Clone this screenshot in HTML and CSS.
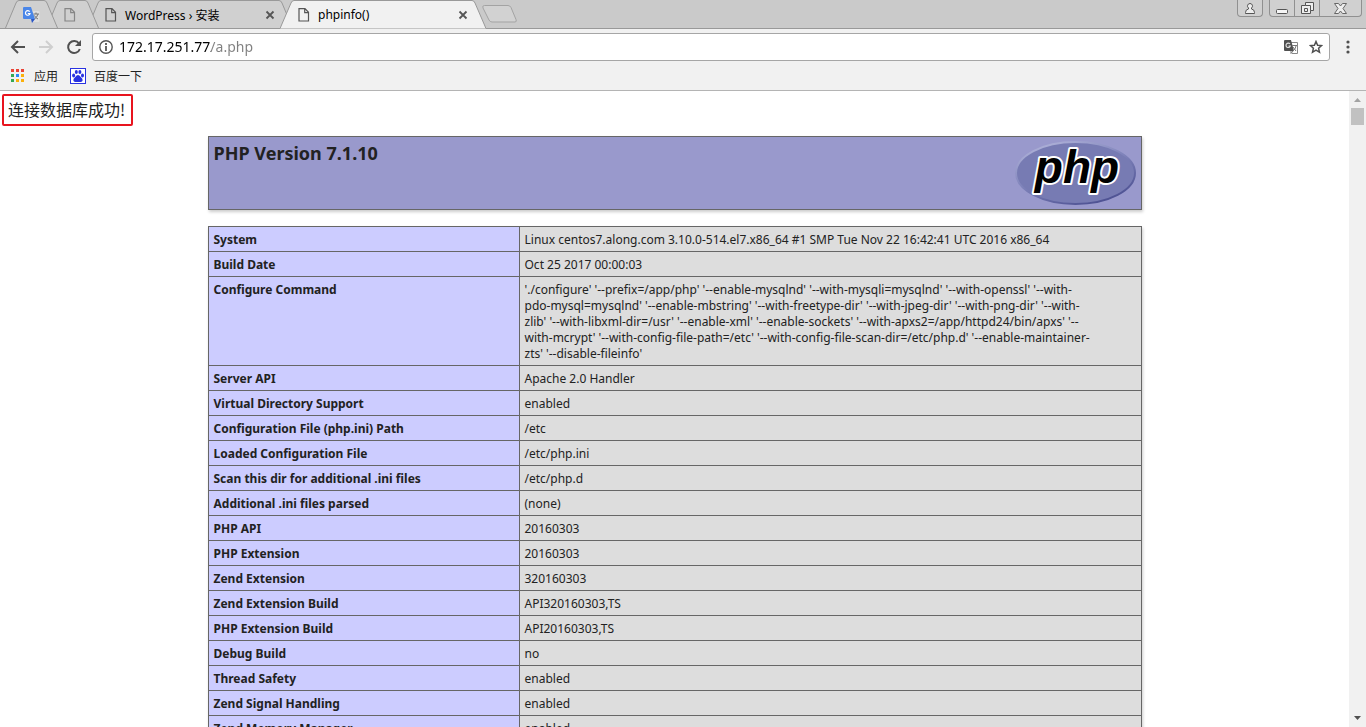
FILE: index.html
```
<!DOCTYPE html>
<html lang="zh-CN">

<head>
    <meta charset="UTF-8">
    <meta name="viewport" content="width=device-width, initial-scale=1.0">
    <title>phpinfo()</title>
    <link rel="stylesheet" href="styles.css">
</head>

<body>
    <header class="browser">
        <div class="tabs">
            <div class="tab tab-small">
                <svg class="shape" width="53" height="28"><path d="M0.500 28L11 3Q12 .5 14 .5H39Q41 .5 42 3L52.500 28"/></svg>
                <svg class="icon" width="17" height="16" viewBox="0 0 17 16">
                    <path d="M7 4h8.500q1 0 1 1v9q0 1-1 1H10z" fill="#dedede"/>
                    <path d="M1 0h7l4 12H1q-1 0-1-1V1q0-1 1-1z" fill="#4a86e8"/>
                    <path d="M8 12h4l-3 4z" fill="#2a56c6"/>
                    <path d="M6.700 4.700A2.300 2.300 0 1 0 7 6.500H4.800" fill="none" stroke="#fff" stroke-width="1.200"/>
                    <path d="M10.500 7H16M13 5.500V7M15 7q-1 3.500-3.500 5M11.500 8.500q1 2.500 3.500 3.500" fill="none" stroke="#777"/>
                </svg>
            </div>
            <div class="tab tab-small">
                <svg class="shape" width="53" height="28"><path d="M0.500 28L11 3Q12 .5 14 .5H39Q41 .5 42 3L52.500 28"/></svg>
                <svg class="icon faded" width="12" height="14" viewBox="0 0 12 14"><path d="M1 .7h6L10.500 4.300V13H1zM6.700 1v3.600h3.600" fill="none" stroke="#555" stroke-width="1.200"/></svg>
            </div>
            <div class="tab">
                <svg class="shape" width="206" height="28"><path d="M0.500 28L11 3Q12 .5 14 .5H192Q194 .5 195 3L205.500 28"/></svg>
                <svg class="icon" width="12" height="14" viewBox="0 0 12 14"><path d="M1 .7h6L10.500 4.300V13H1zM6.700 1v3.600h3.600" fill="none" stroke="#555" stroke-width="1.200"/></svg>
                <span class="tab-title">WordPress › 安装</span>
                <button class="close" aria-label="关闭"><svg width="10" height="10"><path d="M1.500 1.500l7 7m0-7l-7 7" stroke="#555" stroke-width="1.800"/></svg></button>
            </div>
            <div class="tab active">
                <svg class="shape" width="206" height="29"><path d="M0 28.500L11 3Q12 .5 14 .5H192Q194 .5 195 3L206 28.500"/></svg>
                <svg class="icon" width="12" height="14" viewBox="0 0 12 14"><path d="M1 .7h6L10.500 4.300V13H1zM6.700 1v3.600h3.600" fill="none" stroke="#555" stroke-width="1.200"/></svg>
                <span class="tab-title">phpinfo()</span>
                <button class="close" aria-label="关闭"><svg width="10" height="10"><path d="M1.500 1.500l7 7m0-7l-7 7" stroke="#555" stroke-width="1.800"/></svg></button>
            </div>
            <button class="new-tab" aria-label="打开新的标签页"><svg width="35" height="18"><path d="M2.500.5H26q2 0 3 2l5 12q1 2.500-1 2.500H10q-2 0-3-2L1 3Q0 .5 2.500.5z" fill="#d2d2d2" stroke="#a3a3a3"/></svg></button>
            <div class="window-buttons">
                <button class="win user" aria-label="用户"><svg width="12" height="13"><path d="M6 1.500a2.500 2.500 0 0 1 1.500 4.500v1q3 .5 3 3.500v1h-9v-1q0-3 3-3.500V6A2.500 2.500 0 0 1 6 1.500z" fill="#eee" stroke="#555"/></svg></button>
                <div class="win-group">
                    <button class="win" aria-label="最小化"><svg width="13" height="13"><rect x=".5" y="7.500" width="11" height="4" rx="1" fill="#f5f5f5" stroke="#555"/></svg></button>
                    <button class="win" aria-label="还原"><svg width="13" height="13"><path d="M4.500.5h8v8h-3v3h-9v-8h4z" fill="#eee" stroke="#555"/><path d="M4.500 3.500h5v5M3.500 6.500h3v3h-3z" fill="none" stroke="#555"/></svg></button>
                    <button class="win wide" aria-label="关闭窗口"><svg width="13" height="11"><path d="M.5.5h4l2 2.500 2-2.500h4L9 5.500l3.500 5h-4L6.500 8l-2 2.500h-4l3.500-5z" fill="#eee" stroke="#666"/></svg></button>
                </div>
            </div>
        </div>
        <div class="toolbar">
            <button class="nav" aria-label="后退"><svg width="16" height="16"><path d="M15 8H2M8 2L2 8l6 6" fill="none" stroke="#505050" stroke-width="2"/></svg></button>
            <button class="nav" aria-label="前进"><svg width="16" height="16"><path d="M1 8h13M8 2l6 6-6 6" fill="none" stroke="#cfcfcf" stroke-width="2"/></svg></button>
            <button class="nav" aria-label="重新加载"><svg width="16" height="16"><path d="M13 4.500A6 6 0 1 0 13.800 10" fill="none" stroke="#505050" stroke-width="2"/><path d="M15 1v6H9z" fill="#505050"/></svg></button>
            <div class="address">
                <svg width="14" height="14"><circle cx="7" cy="7" r="6.200" fill="none" stroke="#555" stroke-width="1.400"/><path d="M7 6v5M7 3v2" stroke="#555" stroke-width="1.800"/></svg>
                <input class="url" type="text" aria-label="地址" value="172.17.251.77/a.php">
                <button class="nav" aria-label="翻译此页"><svg width="15" height="14"><path d="M6 2.500h7.500v11H8" fill="#fff" stroke="#888"/><path d="M1 0h6l3 11H1q-1 0-1-1V1q0-1 1-1z" fill="#505050"/><path d="M6 4A2.200 2.200 0 1 0 6.300 6H4.500" fill="none" stroke="#ddd" stroke-width="1.200"/><path d="M8 5.500h5M12 6q-.5 3-3 5M9 7l3 4M7 11v2.500l2-2.500" fill="none" stroke="#777"/></svg></button>
                <button class="nav" aria-label="为此页添加书签"><svg width="14" height="14"><path d="M7 1.500l1.600 3.700 4 .4-3 2.700.9 4L7 10.200l-3.500 2.100.9-4-3-2.700 4-.4z" fill="none" stroke="#505050" stroke-width="1.500"/></svg></button>
            </div>
            <button class="nav menu" aria-label="菜单"><svg width="4" height="14" fill="#505050"><circle cx="2" cy="2" r="1.600"/><circle cx="2" cy="7" r="1.600"/><circle cx="2" cy="12" r="1.600"/></svg></button>
        </div>
        <nav class="bookmarks">
            <a href="#">
                <svg width="13" height="13"><path d="M0 0h3v3H0zM5 0h3v3H5zM10 0h3v3h-3z" fill="#ea4335"/><path d="M0 5h3v3H0zM0 10h3v3H0z" fill="#34a853"/><path d="M5 5h3v3H5z" fill="#2a8af6"/><path d="M10 5h3v3h-3zM5 10h3v3H5zM10 10h3v3h-3z" fill="#fbb00a"/></svg>
                应用
            </a>
            <a href="#">
                <svg width="16" height="16"><rect x=".5" y=".5" width="15" height="15" fill="#fff" stroke="#2932e1"/><g fill="#2932e1"><ellipse cx="3.600" cy="7.500" rx="1.500" ry="1.900"/><ellipse cx="6.300" cy="4" rx="1.500" ry="2"/><ellipse cx="9.900" cy="4" rx="1.500" ry="2"/><ellipse cx="12.500" cy="7.500" rx="1.500" ry="1.900"/><path d="M8 7q1.500 0 2.500 1.800l1.800 2q1 2.700-1.300 3.200H5q-2.300-.5-1.300-3.200l1.800-2Q6.500 7 8 7z"/></g></svg>
                百度一下
            </a>
        </nav>
    </header>
    <div class="view">
        <main class="page">
            <p class="message">连接数据库成功!</p>
            <div class="center">
                <div class="banner">
                    <h1>PHP Version 7.1.10</h1>
                    <svg class="logo" width="121" height="65" viewBox="0 0 121 65" role="img" aria-label="PHP logo">
                        <defs>
                            <linearGradient id="rim" x1="0.200" y1="0" x2="0.800" y2="1">
                                <stop offset="0" stop-color="#b0b3d9"/>
                                <stop offset=".45" stop-color="#8084bb"/>
                                <stop offset="1" stop-color="#484c8e"/>
                            </linearGradient>
                        </defs>
                        <ellipse cx="60.500" cy="32" rx="59.500" ry="31" fill="#777bb3" stroke="url(#rim)" stroke-width="2"/>
                        <text class="logo-text" x="62" y="42" text-anchor="middle">php</text>
                    </svg>
                </div>
                <table>
                    <tr><th scope="row">System</th><td>Linux centos7.along.com 3.10.0-514.el7.x86_64 #1 SMP Tue Nov 22 16:42:41 UTC 2016 x86_64</td></tr>
                    <tr><th scope="row">Build Date</th><td>Oct 25 2017 00:00:03</td></tr>
                    <tr><th scope="row">Configure Command</th><td>'./configure' '--prefix=/app/php' '--enable-mysqlnd' '--with-mysqli=mysqlnd' '--with-openssl' '--with-<br>pdo-mysql=mysqlnd' '--enable-mbstring' '--with-freetype-dir' '--with-jpeg-dir' '--with-png-dir' '--with-<br>zlib' '--with-libxml-dir=/usr' '--enable-xml' '--enable-sockets' '--with-apxs2=/app/httpd24/bin/apxs' '--<br>with-mcrypt' '--with-config-file-path=/etc' '--with-config-file-scan-dir=/etc/php.d' '--enable-maintainer-<br>zts' '--disable-fileinfo'</td></tr>
                    <tr><th scope="row">Server API</th><td>Apache 2.0 Handler</td></tr>
                    <tr><th scope="row">Virtual Directory Support</th><td>enabled</td></tr>
                    <tr><th scope="row">Configuration File (php.ini) Path</th><td>/etc</td></tr>
                    <tr><th scope="row">Loaded Configuration File</th><td>/etc/php.ini</td></tr>
                    <tr><th scope="row">Scan this dir for additional .ini files</th><td>/etc/php.d</td></tr>
                    <tr><th scope="row">Additional .ini files parsed</th><td>(none)</td></tr>
                    <tr><th scope="row">PHP API</th><td>20160303</td></tr>
                    <tr><th scope="row">PHP Extension</th><td>20160303</td></tr>
                    <tr><th scope="row">Zend Extension</th><td>320160303</td></tr>
                    <tr><th scope="row">Zend Extension Build</th><td>API320160303,TS</td></tr>
                    <tr><th scope="row">PHP Extension Build</th><td>API20160303,TS</td></tr>
                    <tr><th scope="row">Debug Build</th><td>no</td></tr>
                    <tr><th scope="row">Thread Safety</th><td>enabled</td></tr>
                    <tr><th scope="row">Zend Signal Handling</th><td>enabled</td></tr>
                    <tr><th scope="row">Zend Memory Manager</th><td>enabled</td></tr>
                </table>
            </div>
        </main>
        <div class="scrollbar">
            <svg width="7" height="4"><path d="M0 4L3.500 0 7 4z" fill="#a3a3a3"/></svg>
            <div class="thumb"></div>
            <svg class="down" width="7" height="4"><path d="M0 0h7L3.500 4z" fill="#505050"/></svg>
        </div>
    </div>
</body>

</html>
```
FILE: styles.css
```
* {
    box-sizing: border-box;
    margin: 0;
    padding: 0;
}

body {
    display: flex;
    flex-direction: column;
    height: 100vh;
    overflow: hidden;
    background-color: #fff;
    color: #222;
    font-family: "Noto Sans", "Noto Sans CJK SC", sans-serif;
    font-size: 12px;
}

svg {
    display: block;
    flex: none;
}

button {
    display: flex;
    align-items: center;
    justify-content: center;
    flex: none;
    border: none;
    background: none;
}

.browser {
    flex: none;
    background-color: #f1f1f1;
    border-bottom: 1px solid #b4b4b4;
    color: #000;
}

/* tab strip */
.tabs {
    display: flex;
    height: 29px;
    padding-left: 5px;
    background-color: #cacaca;
    border-bottom: 1px solid #999;
}

.tab {
    position: relative;
    z-index: 1;
    display: flex;
    align-items: center;
    gap: 8px;
    flex: none;
    width: 206px;
    height: 29px;
    padding: 0 18px;
    margin-right: -12px;
}

.tab-small {
    z-index: 2;
    width: 53px;
}

.tab:first-child {
    z-index: 3;
}

.active {
    z-index: 4;
    margin-left: -1px;
}

.shape {
    position: absolute;
    left: 0;
    top: 0;
    z-index: -1;
    fill: #d0d0d0;
    stroke: #999;
}

.active .shape {
    fill: #f1f1f1;
}

.faded {
    opacity: 0.6;
}

.tab-title {
    flex: 1;
}

.new-tab {
    margin-left: 8px;
}

.window-buttons {
    display: flex;
    gap: 6px;
    margin-left: auto;
    padding-right: 4px;
}

.win-group {
    display: flex;
}

.win {
    width: 25px;
    height: 17px;
    background-color: #d0d0d0;
    border: 1px solid #909090;
    border-top: none;
    border-left-width: 0;
}

.win:first-child {
    width: 26px;
    border-left-width: 1px;
    border-bottom-left-radius: 4px;
}

.win:last-child,
.user {
    border-bottom-right-radius: 4px;
}

.wide {
    width: 42px;
}

/* address row */
.toolbar {
    display: flex;
    align-items: center;
    gap: 12px;
    padding: 4px 12px 0 10px;
}

.address {
    display: flex;
    align-items: center;
    gap: 6px;
    flex: 1;
    height: 28px;
    padding: 0 6px;
    margin-left: -2px;
    background-color: #fff;
    border: 1px solid #a6a6a6;
    border-radius: 3px;
}

.address .nav {
    margin-left: 4px;
}

.url {
    flex: 1;
    min-width: 0;
    padding-bottom: 2px;
    border: none;
    outline: none;
    font-family: inherit;
    font-size: 14px;
    color: transparent;
    background-image: linear-gradient(to right, #000 92px, #808080 92px);
    background-clip: text;
    -webkit-background-clip: text;
}

.menu {
    width: 12px;
}

.bookmarks {
    display: flex;
    gap: 12px;
    height: 29px;
    padding-left: 11px;
}

.bookmarks a {
    display: flex;
    align-items: center;
    gap: 10px;
    color: #222;
    text-decoration: none;
}

.bookmarks a + a {
    gap: 8px;
}

/* page */
.view {
    display: flex;
    flex: 1;
    min-height: 0;
}

.page {
    flex: 1;
    min-width: 0;
    overflow: hidden;
}

.message {
    width: fit-content;
    margin: 3px 2px 10px;
    padding: 1px 6px 3px 4px;
    border: 2px solid #e8141e;
    border-radius: 2px;
    font-family: "Noto Sans CJK SC", sans-serif;
    font-size: 16px;
    line-height: 24px;
}

.center {
    width: 934px;
    max-width: 100%;
    margin: 0 auto;
}

.banner {
    display: flex;
    justify-content: space-between;
    height: 74px;
    margin-bottom: 16px;
    padding: 4px 5px;
    background-color: #99c;
    border: 1px solid #666;
    box-shadow: 1px 2px 3px #ccc;
}

h1 {
    font-size: 18px;
    line-height: 24px;
}

.logo-text {
    font-family: "Liberation Sans", sans-serif;
    font-size: 46px;
    font-weight: bold;
    font-style: italic;
    fill: #000;
    stroke: #fff;
    stroke-width: 4px;
    stroke-linejoin: round;
    paint-order: stroke;
}

table {
    width: 100%;
    border-collapse: collapse;
    box-shadow: 1px 2px 3px #ccc;
}

th,
td {
    padding: 5px 5px 3px;
    border: 1px solid #666;
    text-align: left;
    vertical-align: top;
    line-height: 16px;
}

th {
    width: 311px;
    background-color: #ccf;
}

td {
    background-color: #ddd;
}

.scrollbar {
    display: flex;
    flex-direction: column;
    align-items: center;
    flex: none;
    width: 17px;
    padding: 7px 0;
    background-color: #f1f1f1;
}

.thumb {
    width: 13px;
    height: 17px;
    margin-top: 6px;
    background-color: #c1c1c1;
}

.down {
    margin-top: auto;
}
```
